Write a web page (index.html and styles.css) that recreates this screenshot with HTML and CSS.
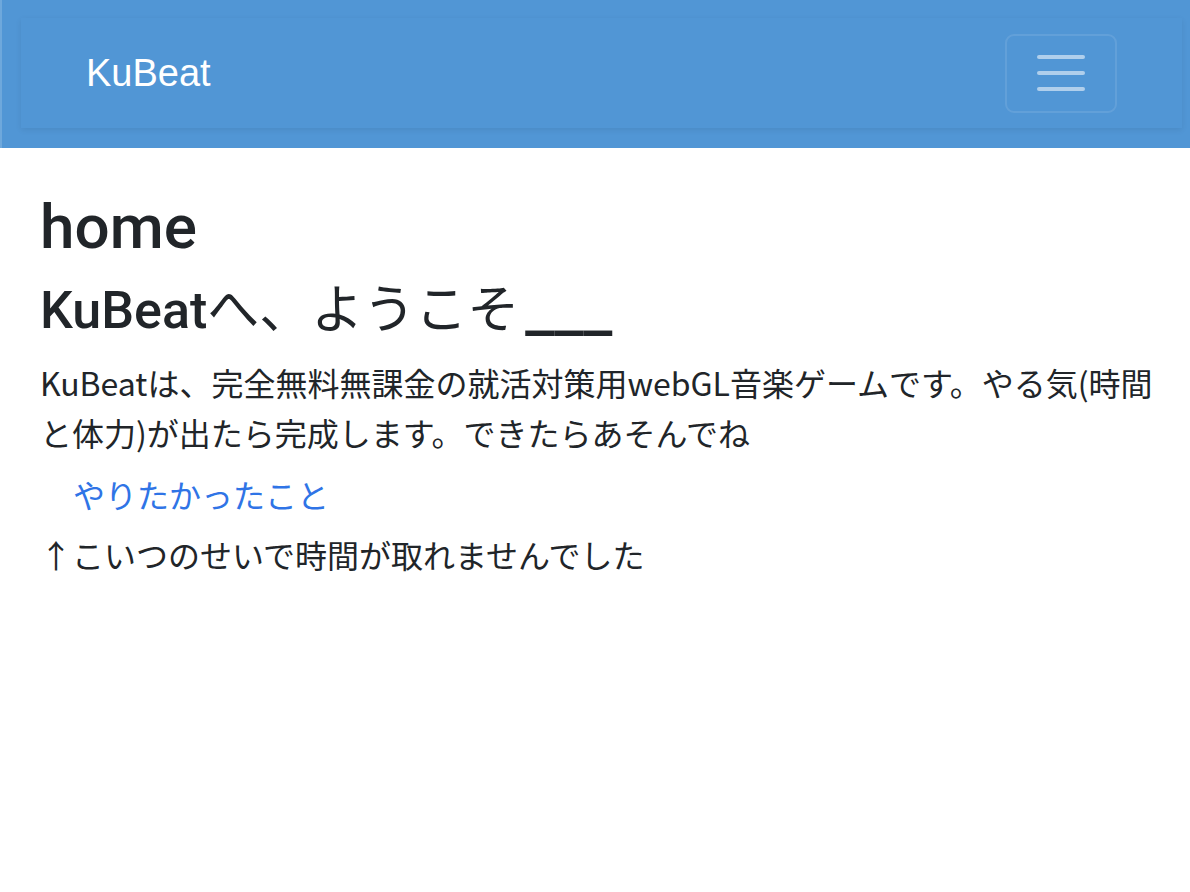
FILE: index.html
```html
<!DOCTYPE html>
<html lang="ja">
<head>
<meta charset="utf-8">
<title>KuBeat</title>
<link rel="stylesheet" href="styles.css">
</head>
<body>
<header class="topbar">
  <nav class="navbar">
    <a class="brand" href="#">KuBeat</a>
    <button class="toggler" type="button" aria-label="menu">
      <span class="bar"></span>
      <span class="bar"></span>
      <span class="bar"></span>
    </button>
  </nav>
</header>
<main class="content">
  <h1 class="title">home</h1>
  <h2 class="subtitle">KuBeat<span class="jp">へ、ようこそ</span><span class="under">___</span></h2>
  <p class="lead">KuBeatは、完全無料無課金の就活対策用webGL音楽ゲームです。やる気(時間と体力)が出たら完成します。できたらあそんでね</p>
  <ul class="links">
    <li><a class="link" href="#">やりたかったこと</a></li>
  </ul>
  <p class="note">↑こいつのせいで時間が取れませんでした</p>
</main>
</body>
</html>
```
FILE: styles.css
```css
html, body {
  margin: 0;
  padding: 0;
  background: #ffffff;
}
body {
  font-family: "Noto Sans CJK JP", "Liberation Sans", sans-serif;
  color: #212529;
  font-size: 32px;
  line-height: 50px;
}
.topbar {
  background: #5196d5;
  height: 148px;
  box-sizing: border-box;
  padding: 18px 8px 20px 19px;
  border-left: 2px solid #6ea8dc;
}
.navbar {
  height: 110px;
  box-sizing: border-box;
  display: flex;
  align-items: center;
  justify-content: space-between;
  padding: 0 65px 0 65px;
  background: #5196d5;
  box-shadow: 0 2px 6px rgba(0, 0, 0, 0.08);
}
.brand {
  font-family: "Liberation Sans", "Noto Sans CJK JP", sans-serif;
  font-size: 38px;
  color: #ffffff;
  text-decoration: none;
  line-height: 1;
}
.toggler {
  width: 112px;
  height: 79px;
  box-sizing: border-box;
  border: 2px solid rgba(255, 255, 255, 0.1);
  border-radius: 9px;
  background: transparent;
  display: flex;
  flex-direction: column;
  align-items: center;
  justify-content: center;
  gap: 12px;
  padding: 0;
  margin-right: 0;
}
.bar {
  display: block;
  width: 48px;
  height: 4px;
  border-radius: 2px;
  background: rgba(255, 255, 255, 0.55);
}
.content {
  padding: 42px 20px 0 40px;
}
.title {
  font-family: Roboto, "Noto Sans CJK JP", sans-serif;
  font-weight: 500;
  font-size: 62px;
  line-height: 1.2;
  margin: 0 0 16px 0;
}
.subtitle {
  font-family: Roboto, "Noto Sans CJK JP", sans-serif;
  font-weight: 500;
  font-size: 52px;
  line-height: 1.2;
  margin: 0 0 14px 0;
}
.subtitle .jp {
  font-family: "Noto Sans CJK JP", sans-serif;
  font-weight: 400;
  line-height: 40px;
}
.subtitle .under {
  font-family: "DejaVu Sans", sans-serif;
  font-weight: 700;
  font-size: 58px;
  line-height: 40px;
  margin-left: 6px;
  position: relative;
  top: -6px;
}
.lead {
  margin: 0 0 12px 0;
}
.links {
  list-style: none;
  margin: 0 0 10px 0;
  padding: 0 0 0 33px;
}
.link {
  color: #2f74e6;
  text-decoration: none;
}
.note {
  margin: 0;
}
```
